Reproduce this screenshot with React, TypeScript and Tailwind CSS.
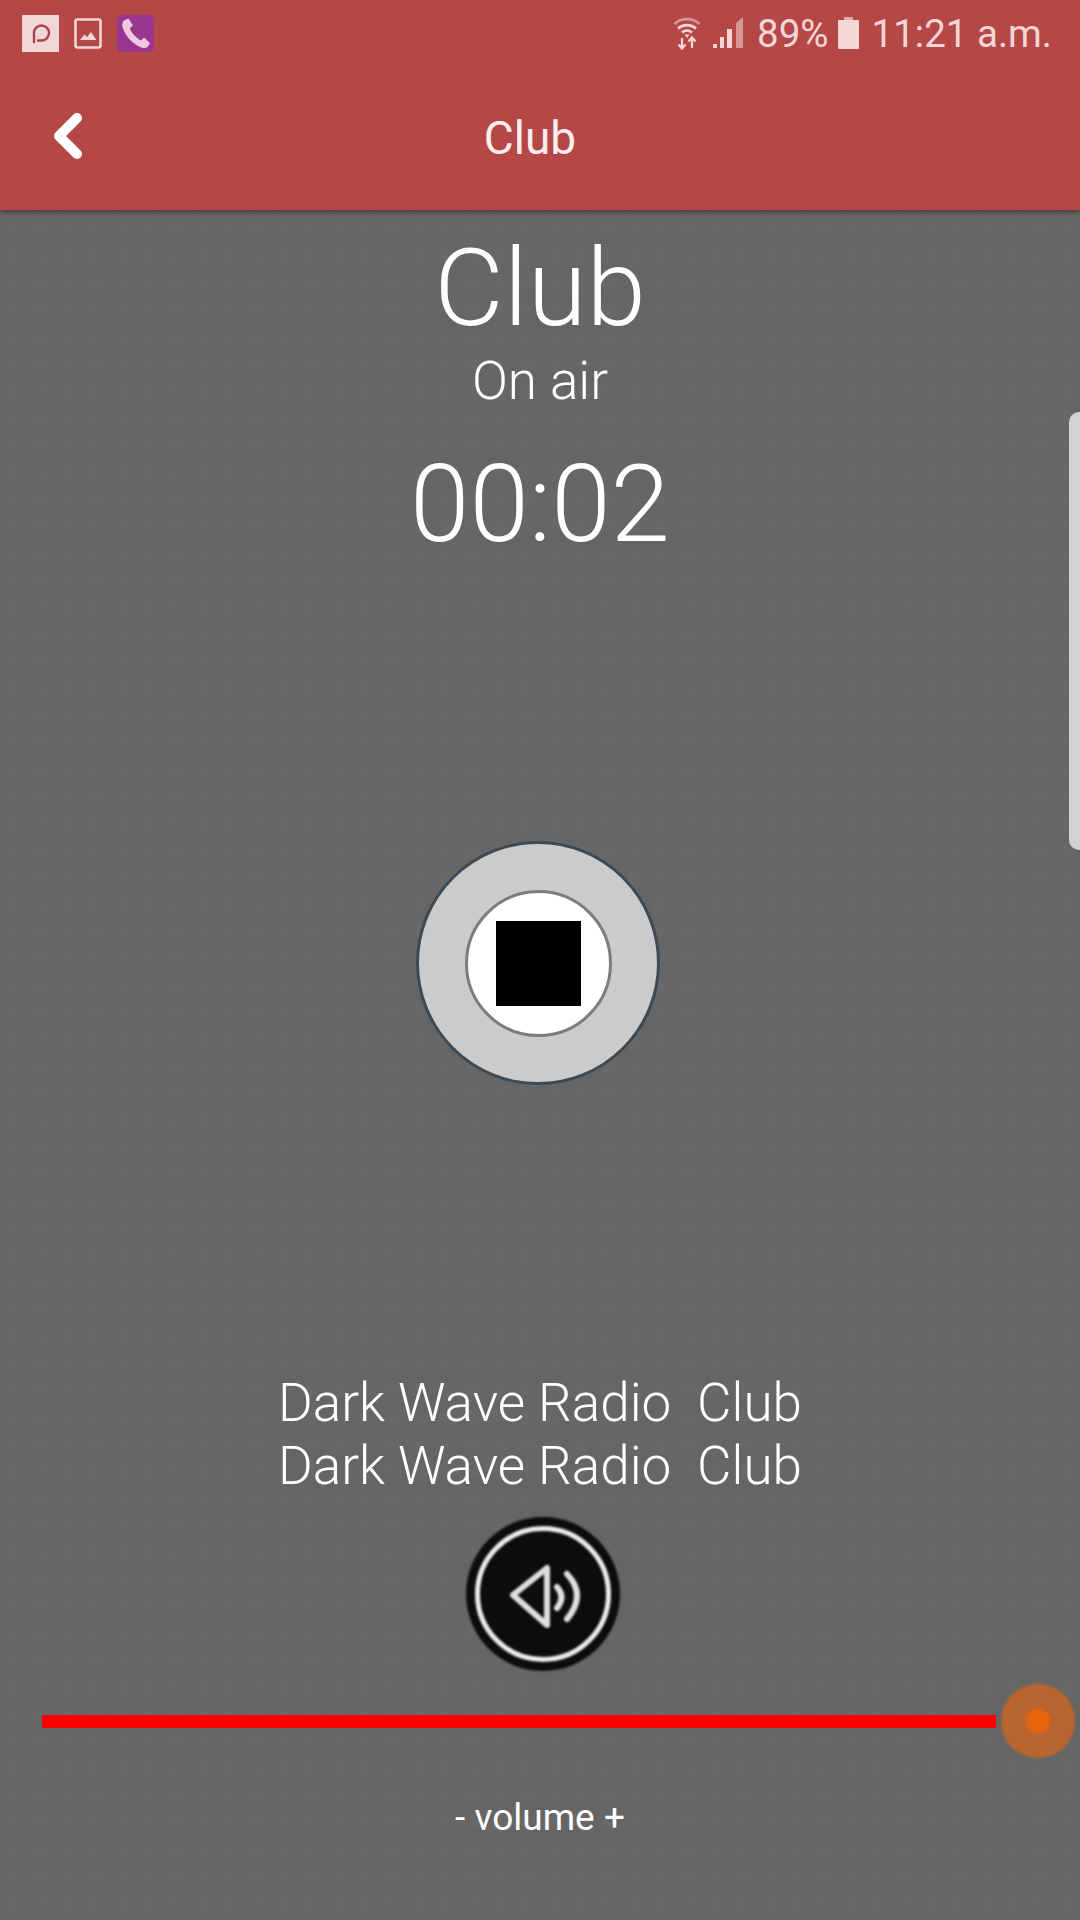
import { ChevronLeft } from 'lucide-react';

const SANS = "font-['Roboto',sans-serif]";
const LIGHT = "font-['Roboto',sans-serif] font-light";

function StatusLeftIcons() {
  return (
    <div className="flex items-center">
      <div className="flex h-[37px] w-[37px] items-center justify-center bg-[#f0d6d6]">
        <svg viewBox="0 0 37 37" className="h-[37px] w-[37px]" fill="none" stroke="#a84545" strokeWidth="2.4" strokeLinecap="round">
          <path d="M12 27 V18 A7.5 7.5 0 1 1 19.5 25.5 H16" />
        </svg>
      </div>
      <svg viewBox="0 0 28 31" className="ml-[15px] h-[31px] w-[28px]">
        <rect x="1.5" y="1.5" width="25" height="28" rx="2" fill="none" stroke="#f0d6d6" strokeWidth="2.6" />
        <path d="M6 22 L10.5 16.5 L13 19 L17 14 L22.5 22 Z" fill="#f0d6d6" />
      </svg>
      <div className="ml-[15px] flex h-[37px] w-[37px] items-center justify-center rounded-[5px] bg-[#9a3590]">
        <svg viewBox="0 0 37 37" className="h-[37px] w-[37px]" fill="#efc9e0">
          <path d="M7 5.5 L11.5 3.5 L16 10.5 L12.8 13.2 C14 17 19 23 24 25.5 L27 22.6 L33 28 L30.5 32 C29 33.5 26 33.5 22 31.5 C14 27.5 7.5 19 5.5 12 C4.8 9.5 5.5 7 7 5.5 Z" />
        </svg>
      </div>
    </div>
  );
}

function StatusRightIcons() {
  return (
    <div className={`flex items-center pt-[3px] text-[38.5px] leading-none text-[#f3d6d6] ${SANS}`}>
      <svg viewBox="0 0 28 34" className="-mt-[3px] h-[34px] w-[28px]" fill="none" stroke="#f3d6d6" strokeWidth="2.6">
        <path d="M1.5 8 C8 1.5 20 1.5 26.5 8" opacity="0.55" />
        <path d="M5 12.5 C10 8 18 8 23 12.5" />
        <path d="M9 16.5 C12 14 16 14 19 16.5" />
        <path d="M11.5 18.5 L14 22 L16.5 18.5 Z" fill="#f3d6d6" stroke="none" />
        <path d="M9 22 V32 M5.5 28.5 L9 32.5 L12.5 28.5 M19 32 V22 M15.5 25.5 L19 21.5 L22.5 25.5" strokeWidth="2.2" />
      </svg>
      <svg viewBox="0 0 32 34" className="-mt-[3px] ml-[11px] h-[34px] w-[32px]" fill="#f3d6d6">
        <rect x="1" y="28" width="4" height="4" />
        <rect x="8" y="21" width="4" height="11" />
        <rect x="15" y="13" width="5" height="19" />
        <path d="M24 7 L31 1 V32 H24 Z" opacity="0.55" />
      </svg>
      <span className="ml-[13px]">89%</span>
      <svg viewBox="0 0 21 32" className="-mt-[3px] ml-[9px] h-[32px] w-[21px]" fill="#f3d6d6">
        <rect x="6" y="0" width="9" height="3" opacity="0.7" />
        <rect x="0" y="3" width="21" height="29" rx="1" />
      </svg>
      <span className="ml-[13px]">11:21 a.m.</span>
    </div>
  );
}

function StopButton() {
  return (
    <div className="flex h-[244px] w-[244px] items-center justify-center rounded-full border-[3px] border-[#3d4a55] bg-[#cbcbcb] blur-[0.5px]">
      <div className="flex h-[147px] w-[147px] items-center justify-center rounded-full border-[3px] border-[#7d7d7d] bg-white">
        <div className="h-[85px] w-[85px] bg-black" />
      </div>
    </div>
  );
}

function VolumeButton() {
  return (
    <div className="flex h-[154px] w-[154px] items-center justify-center rounded-full bg-[#0c0c0c] blur-[1px]">
      <div className="flex h-[136px] w-[136px] items-center justify-center rounded-full border-[5px] border-[#ececec]">
        <svg viewBox="0 0 80 80" className="h-[80px] w-[80px]" fill="none" stroke="#e0e0e0" strokeWidth="6" strokeLinecap="round" strokeLinejoin="round">
          <path d="M10 41 L44 14 V71 Z" />
          <path d="M54 33 Q63 43 54 54" />
          <path d="M64 20 Q84 41 64 65" />
        </svg>
      </div>
    </div>
  );
}

function VolumeSlider() {
  return (
    <div className="flex items-center pl-[42px] pr-[5px]">
      <div className="h-[13px] flex-1 bg-[#ff0000]" />
      <div className="ml-[5px] flex h-[74px] w-[74px] items-center justify-center rounded-full bg-[#b9652f] blur-[0.8px]">
        <div className="h-[24px] w-[24px] rounded-full bg-[#e8650c]" />
      </div>
    </div>
  );
}

export default function App() {
  return (
    <div className="relative flex h-[1920px] w-[1080px] flex-col overflow-hidden bg-[#656565] bg-[radial-gradient(circle,#696969_0,transparent_65%)] bg-size-[27px_27px]">
      <header className="relative h-[210px] bg-[#b64747] shadow-[0_2px_4px_rgba(0,0,0,0.4)]">
        <div className="flex h-[66px] items-center justify-between pl-[22px] pr-[28px]">
          <StatusLeftIcons />
          <StatusRightIcons />
        </div>
        <div className="relative flex h-[144px] items-center justify-center pr-[20px]">
          <ChevronLeft className="absolute left-[32px] top-[34px] h-[72px] w-[72px] text-white" strokeWidth={3.3} />
          <h1 className={`text-[46px] leading-none text-[#fbeeee] ${SANS}`}>Club</h1>
        </div>
      </header>

      <main className="flex flex-1 flex-col items-center text-white">
        <h2 className={`mt-[20px] text-[107px] leading-[118px] ${LIGHT}`}>Club</h2>
        <p className={`mt-[4px] text-[53px] leading-[58px] ${LIGHT}`}>On air</p>
        <p className={`mt-[36px] text-[107px] leading-[118px] ${LIGHT}`}>00:02</p>

        <div className="mr-[4px] mt-[277px]">
          <StopButton />
        </div>

        <div className={`mt-[287px] flex flex-col items-center text-[53px] leading-[63px] ${LIGHT}`}>
          <p className="whitespace-pre">Dark Wave Radio  Club</p>
          <p className="whitespace-pre">Dark Wave Radio  Club</p>
        </div>

        <div className="ml-[6px] mt-[19px]">
          <VolumeButton />
        </div>

        <div className="mt-[13px] w-full">
          <VolumeSlider />
        </div>

        <p className={`mt-[40px] text-[37px] leading-[40px] ${SANS}`}>- volume +</p>
      </main>

      <div className="absolute right-0 top-[412px] h-[438px] w-[11px] rounded-l-[10px] bg-[#d2d2d2]" />
    </div>
  );
}
